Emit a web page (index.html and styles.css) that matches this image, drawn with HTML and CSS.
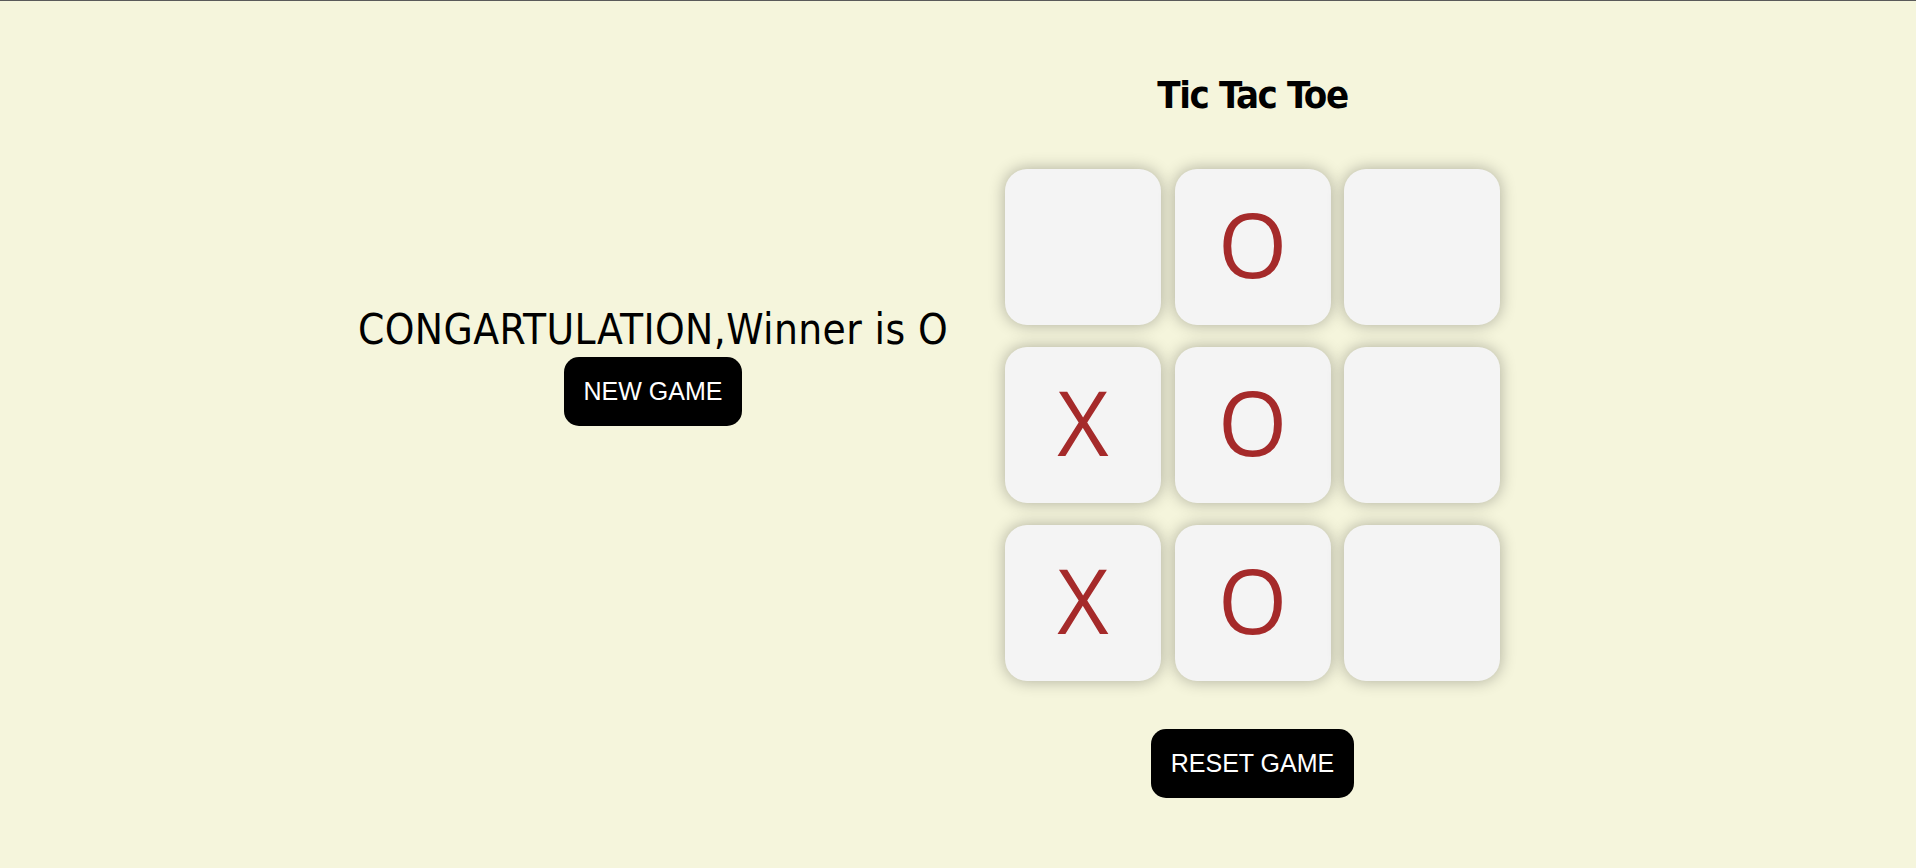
FILE: index.html
```html
<!DOCTYPE html>
<html lang="en">
<head>
<meta charset="utf-8">
<title>Tic Tac Toe</title>
<link rel="stylesheet" href="styles.css">
</head>
<body>
<main class="page">
  <section class="msg-container">
    <p class="msg">CONGARTULATION,Winner is O</p>
    <button class="btn new-btn">NEW GAME</button>
  </section>
  <section class="game-container">
    <h1 class="title">Tic Tac Toe</h1>
    <div class="board">
      <button class="box"></button>
      <button class="box">O</button>
      <button class="box"></button>
      <button class="box">X</button>
      <button class="box">O</button>
      <button class="box"></button>
      <button class="box">X</button>
      <button class="box">O</button>
      <button class="box"></button>
    </div>
    <button class="btn reset-btn">RESET GAME</button>
  </section>
</main>
</body>
</html>
```

FILE: styles.css
```css
* { box-sizing: border-box; }

html, body {
  margin: 0;
  height: 100%;
}

body {
  background: #f5f5dc;
  border-top: 1px solid #5a5a5a;
  overflow: hidden;
}

.page {
  display: grid;
  grid-template-columns: 600px 495px;
  column-gap: 52px;
  padding-left: 353px;
  align-items: start;
}

.msg-container {
  display: flex;
  flex-direction: column;
  align-items: center;
  padding-top: 304px;
}

.msg {
  margin: 0;
  font-family: "DejaVu Sans Condensed", "DejaVu Sans", sans-serif;
  font-size: 42px;
  line-height: 49px;
  letter-spacing: 0.4px;
  color: #000;
  white-space: nowrap;
}

.btn {
  background: #000;
  color: #fff;
  border: none;
  border-radius: 15px;
  font-family: "Liberation Sans", Arial, sans-serif;
  font-size: 25px;
  line-height: 29px;
  padding: 20px;
  cursor: pointer;
}

.new-btn {
  margin-top: 3px;
}

.game-container {
  display: flex;
  flex-direction: column;
  align-items: center;
  padding-top: 71px;
}

.title {
  margin: 0;
  font-family: "DejaVu Sans Condensed", "DejaVu Sans", sans-serif;
  font-weight: bold;
  font-size: 38px;
  line-height: 47px;
  letter-spacing: -1.4px;
}

.board {
  margin-top: 50px;
  display: grid;
  grid-template-columns: repeat(3, 156px);
  grid-template-rows: repeat(3, 156px);
  column-gap: 13.5px;
  row-gap: 22px;
}

.box {
  width: 156px;
  height: 156px;
  border: none;
  border-radius: 22px;
  background: #f4f4f4;
  box-shadow: 0 0 16px rgba(0, 0, 0, 0.3);
  color: #a52a2a;
  font-family: "Open Sans", sans-serif;
  font-size: 89px;
  line-height: 1;
  padding: 0 0 8px;
}

.reset-btn {
  margin-top: 48px;
}
```
